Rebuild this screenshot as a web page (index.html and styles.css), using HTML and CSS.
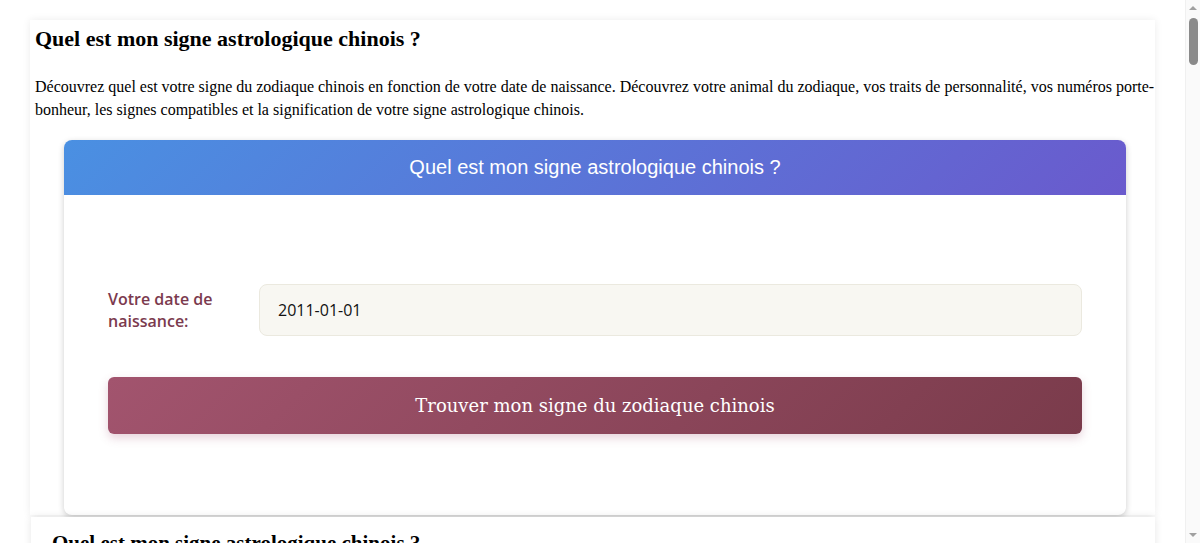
FILE: index.html
```html
<!DOCTYPE html>
<html lang="fr">
<head>
    <meta charset="UTF-8">
    <meta name="viewport" content="width=device-width, initial-scale=1.0">
    <title>Quel est mon signe astrologique chinois ?</title>
    <link rel="stylesheet" href="styles.css">
</head>
<body>
<section class="intro">
    <h2>Quel est mon signe astrologique chinois ?</h2>
    <p>Découvrez quel est votre signe du zodiaque chinois en fonction de votre date de naissance. Découvrez votre animal du zodiaque, vos traits de personnalité, vos numéros porte-bonheur, les signes compatibles et la signification de votre signe astrologique chinois.</p>
    <div class="calculator">
        <div class="calculator-header">Quel est mon signe astrologique chinois ?</div>
        <div class="calculator-body">
            <div class="form-row">
                <label for="birth-date">Votre date de naissance:</label>
                <input type="text" id="birth-date" value="2011-01-01">
            </div>
            <button type="button">Trouver mon signe du zodiaque chinois</button>
        </div>
    </div>
</section>
<section class="result">
    <h3>Quel est mon signe astrologique chinois ?</h3>
    <p>Votre signe apparaîtra ici après le calcul.</p>
</section>
<div class="scrollbar">
    <span class="arrow up"></span>
    <span class="thumb"></span>
    <span class="arrow down"></span>
</div>
</body>
</html>
```

FILE: styles.css
```css
body {
    margin: 0;
    padding: 0;
    background: #fff;
    font-family: "Liberation Serif", serif;
    color: #000;
}
.intro {
    margin: 20px 45px 0 30px;
    padding: 5px 0 0 5px;
    background: #fff;
    box-shadow: 0 0 8px rgba(0, 0, 0, 0.08);
}
.intro h2 {
    margin: 0;
    font-size: 22px;
    line-height: 28px;
    font-weight: bold;
}
.intro p {
    margin: 22px 0 0;
    font-size: 16px;
    line-height: 23px;
}
.calculator {
    margin: 19px 29px 0 29px;
    border-radius: 8px;
    background: #fff;
    box-shadow: 0 2px 6px rgba(0, 0, 0, 0.2);
}
.calculator-header {
    height: 55px;
    line-height: 55px;
    text-align: center;
    color: #fff;
    font-family: "Liberation Sans", Arial, sans-serif;
    font-size: 20px;
    border-radius: 8px 8px 0 0;
    background: linear-gradient(135deg, #4a90e2, #6a5acd);
}
.calculator-body {
    padding: 89px 44px 81px;
    border-radius: 0 0 10px 10px;
}
.form-row {
    display: flex;
    align-items: center;
}
.form-row label {
    width: 151px;
    flex-shrink: 0;
    font-family: "Open Sans", sans-serif;
    font-weight: 600;
    font-size: 16px;
    line-height: 22px;
    color: #7b3a4e;
}
.form-row input {
    flex: 1;
    height: 52px;
    box-sizing: border-box;
    padding: 0 18px;
    border: 1px solid #ebe9df;
    border-radius: 8px;
    background: #f8f7f2;
    font-family: "Open Sans", sans-serif;
    font-size: 16px;
    color: #111;
}
.calculator-body button {
    display: block;
    width: 100%;
    height: 57px;
    margin-top: 41px;
    border: none;
    border-radius: 6px;
    background: linear-gradient(135deg, #a2546e, #7a3b4b);
    box-shadow: 0 4px 10px rgba(160, 80, 110, 0.25);
    color: #fff;
    font-family: "DejaVu Serif", serif;
    font-size: 18px;
    cursor: pointer;
}
.result {
    margin: 2px 45px 20px 31px;
    padding: 14px 21px 40px;
    background: #fff;
    box-shadow: 0 0 8px rgba(0, 0, 0, 0.1);
}
.result h3 {
    margin: 0;
    font-size: 21px;
    font-weight: bold;
}
.result p {
    font-size: 16px;
}

/* fake browser scrollbar */
.scrollbar {
    position: fixed;
    top: 0;
    right: 0;
    width: 15px;
    height: 100%;
    background: #fafafa;
    border-left: 1px solid #f0f0f0;
    box-sizing: border-box;
}
.scrollbar .thumb {
    position: absolute;
    top: 18px;
    left: 3px;
    width: 9px;
    height: 47px;
    border-radius: 5px;
    background: #8a8a8a;
}
.scrollbar .arrow {
    position: absolute;
    left: 3px;
    width: 0;
    height: 0;
    border-left: 4px solid transparent;
    border-right: 4px solid transparent;
}
.scrollbar .up {
    top: 6px;
    border-bottom: 4px solid #a0a0a0;
}
.scrollbar .down {
    bottom: 6px;
    border-top: 4px solid #a0a0a0;
}
```
